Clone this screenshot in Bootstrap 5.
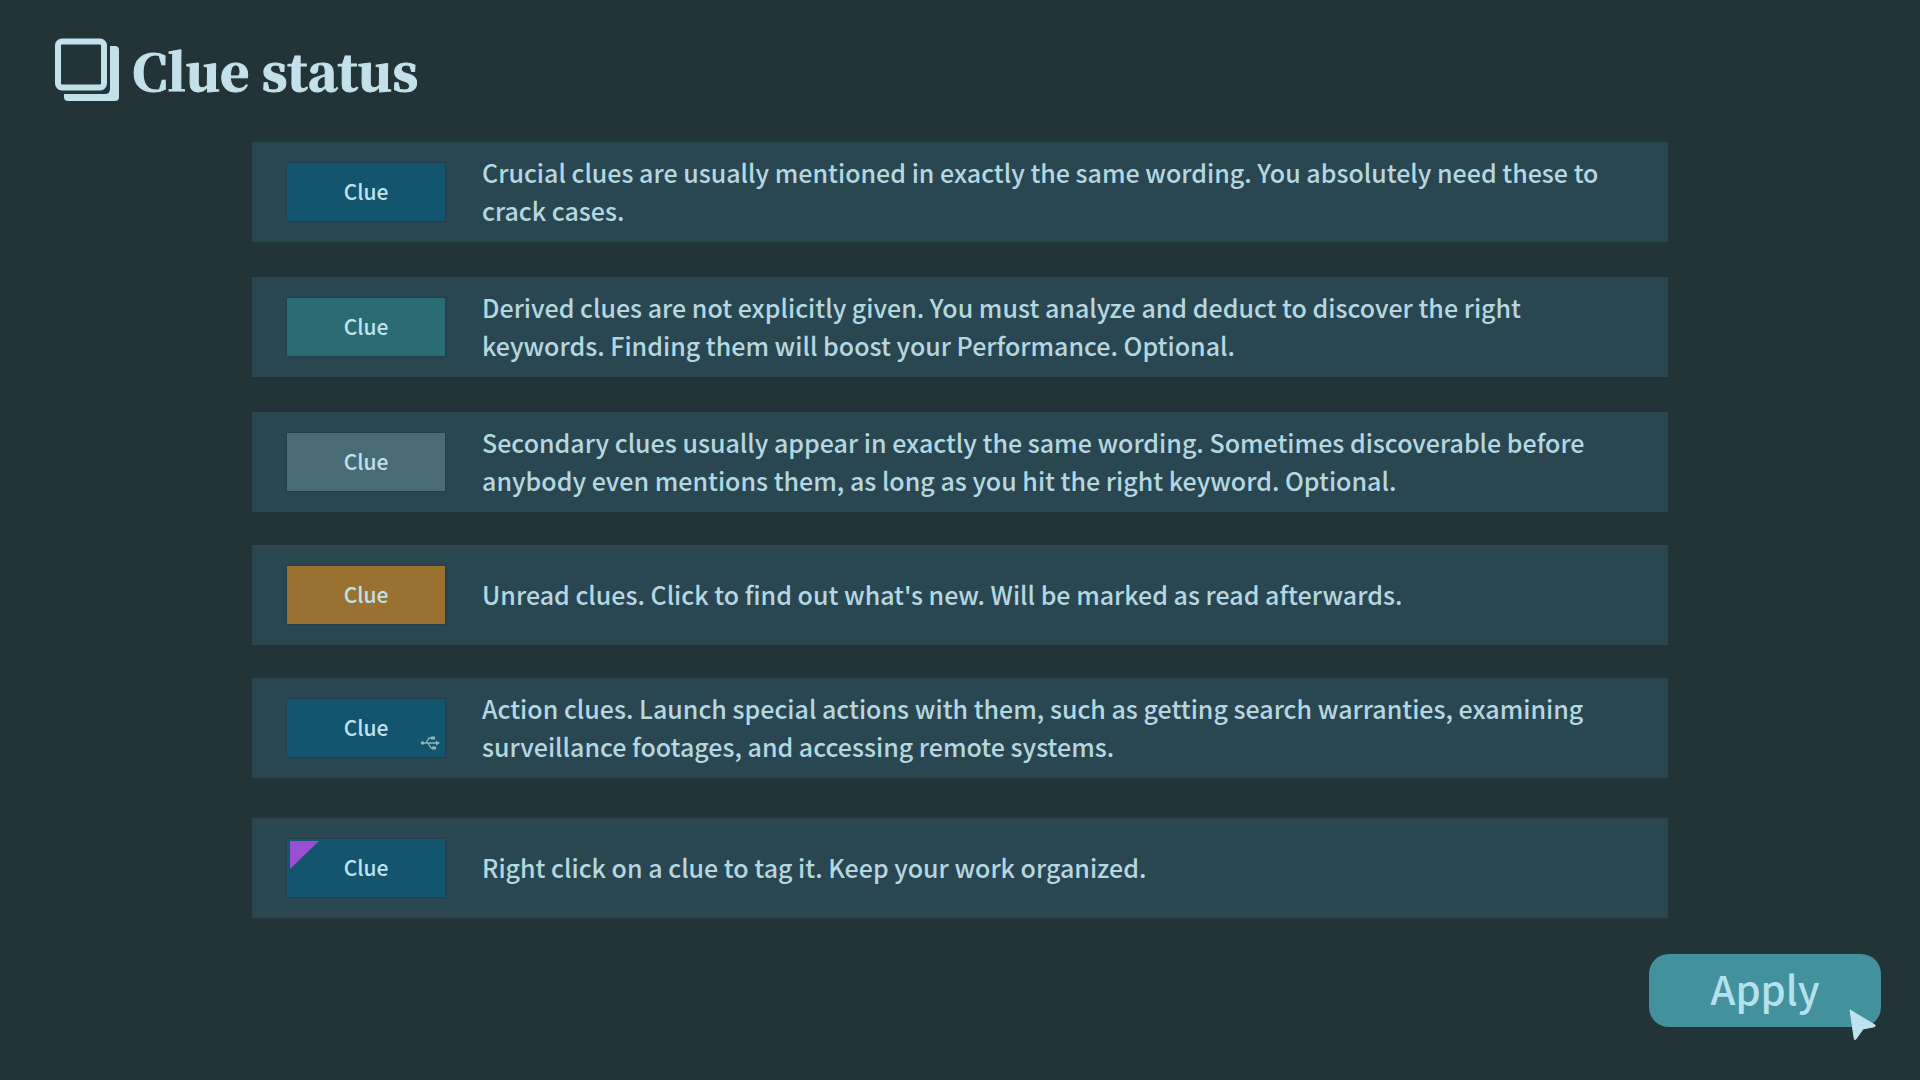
<!DOCTYPE html>
<html lang="en">
<head>
<meta charset="utf-8">
<meta name="viewport" content="width=device-width, initial-scale=1">
<title>Clue status</title>
<link href="https://cdn.jsdelivr.net/npm/bootstrap@5.3.0/dist/css/bootstrap.min.css" rel="stylesheet">
<style>
  body {
    background: #223438;
    color: #b5d7e0;
    font-family: "Noto Sans CJK SC", "Noto Sans", sans-serif;
  }
  .screen { padding: 34px 39px 54px 39px; }
  .title-bar { padding-left: 15px; gap: 12px; }
  .page-title {
    font-family: "Noto Serif CJK SC", "Liberation Serif", serif;
    font-size: 50px;
    font-weight: 900;
    line-height: 70px;
    color: #c2e1eb;
    -webkit-text-stroke: 1px #c2e1eb;
  }
  .title-icon { width: 66px; height: 66px; }
  .clue-list { width: 100%; max-width: 1416px; margin-top: 38px; }
  .clue-row {
    min-height: 100px;
    padding: 0 35px;
    gap: 37px;
    background: #2a4650;
    margin-bottom: 35px;
  }
  .clue-row.tight { margin-bottom: 33px; }
  .clue-row.loose { margin-bottom: 40px; }
  .clue-row:last-child { margin-bottom: 36px; }
  .clue-text { font-size: 25px; line-height: 38px; font-weight: 500; padding-bottom: 2px; }
  .clue-chip {
    width: 158px;
    height: 58px;
    border: 0;
    padding: 0 0 2px;
    background: #13556f;
    color: #bfe3ee;
    font-size: 21px;
    line-height: 34px;
    font-weight: 500;
    box-shadow: 0 0 2px #1d3239;
  }
  .chip-derived { background: #296c71; }
  .chip-secondary { background: #486b74; }
  .chip-unread { background: #997131; }
  .usb-mark { right: 5px; bottom: 6px; width: 20px; height: 16px; }
  .tag-mark { left: 3px; top: 2px; width: 29px; height: 28px; }
  .apply-btn {
    width: 232px;
    height: 73px;
    border: 0;
    padding: 0 0 6px;
    border-radius: 20px;
    background: #42919c;
    color: #b5e1ec;
    font-size: 40px;
    font-weight: 500;
    line-height: 60px;
  }
  .pointer { left: 200px; top: 54px; width: 28px; height: 33px; pointer-events: none; }
</style>
</head>
<body>
<main class="screen d-flex flex-column min-vh-100">
  <header class="title-bar d-flex align-items-center">
    <svg class="title-icon flex-shrink-0" viewBox="0 0 66 66" aria-hidden="true">
      <rect x="4" y="5.500" width="46" height="46" rx="4" fill="none" stroke="#c2e1eb" stroke-width="6"/>
      <path d="M56 10h5q4 0 4 4v47q0 4-4 4H14q-4 0-4-4v-3h41q5 0 5-5z" fill="#c2e1eb"/>
    </svg>
    <h1 class="page-title mb-0">Clue status</h1>
  </header>

  <section class="clue-list mx-auto" aria-label="Clue types">
    <div class="clue-row d-flex align-items-center">
      <button type="button" class="clue-chip flex-shrink-0">Clue</button>
      <p class="clue-text mb-0">Crucial clues are usually mentioned in exactly the same wording. You absolutely need these to crack cases.</p>
    </div>
    <div class="clue-row d-flex align-items-center">
      <button type="button" class="clue-chip chip-derived flex-shrink-0">Clue</button>
      <p class="clue-text mb-0">Derived clues are not explicitly given. You must analyze and deduct to discover the right keywords. Finding them will boost your Performance. Optional.</p>
    </div>
    <div class="clue-row tight d-flex align-items-center">
      <button type="button" class="clue-chip chip-secondary flex-shrink-0">Clue</button>
      <p class="clue-text mb-0">Secondary clues usually appear in exactly the same wording. Sometimes discoverable before anybody even mentions them, as long as you hit the right keyword. Optional.</p>
    </div>
    <div class="clue-row tight d-flex align-items-center">
      <button type="button" class="clue-chip chip-unread flex-shrink-0">Clue</button>
      <p class="clue-text mb-0">Unread clues. Click to find out what's new. Will be marked as read afterwards.</p>
    </div>
    <div class="clue-row loose d-flex align-items-center">
      <button type="button" class="clue-chip position-relative flex-shrink-0">Clue
        <svg class="usb-mark position-absolute" viewBox="0 0 20 16" fill="none" stroke="#8fb5b8" stroke-width="1.300" aria-hidden="true">
          <path d="M2 8h15M6 8l3-5h4M8 8l3 5h2"/>
          <path d="M16 5.500l4 2.500-4 2.500zM11 1.500h4v3h-4zM12 11.500h4v3h-4z" fill="#8fb5b8" stroke="none"/>
          <circle cx="2.500" cy="8" r="1.800" fill="#8fb5b8" stroke="none"/>
        </svg>
      </button>
      <p class="clue-text mb-0">Action clues. Launch special actions with them, such as getting search warranties, examining surveillance footages, and accessing remote systems.</p>
    </div>
    <div class="clue-row d-flex align-items-center">
      <button type="button" class="clue-chip position-relative flex-shrink-0">
        <svg class="tag-mark position-absolute" viewBox="0 0 29 28" aria-hidden="true"><path d="M0 0h29L0 28z" fill="#9850d0"/></svg>
        Clue
      </button>
      <p class="clue-text mb-0">Right click on a clue to tag it. Keep your work organized.</p>
    </div>
  </section>

  <footer class="d-flex justify-content-end">
    <div class="position-relative">
      <button type="button" class="apply-btn d-flex align-items-center justify-content-center">Apply</button>
      <svg class="pointer position-absolute" viewBox="0 0 28 33" aria-hidden="true">
        <path d="M1 2L26 17Q27 19 24 19L14 21L7 31Q5 33 5 29Z" fill="#bee3ee" stroke="#bee3ee" stroke-linejoin="round"/>
      </svg>
    </div>
  </footer>
</main>
<script src="https://cdn.jsdelivr.net/npm/bootstrap@5.3.0/dist/js/bootstrap.bundle.min.js"></script>
</body>
</html>
